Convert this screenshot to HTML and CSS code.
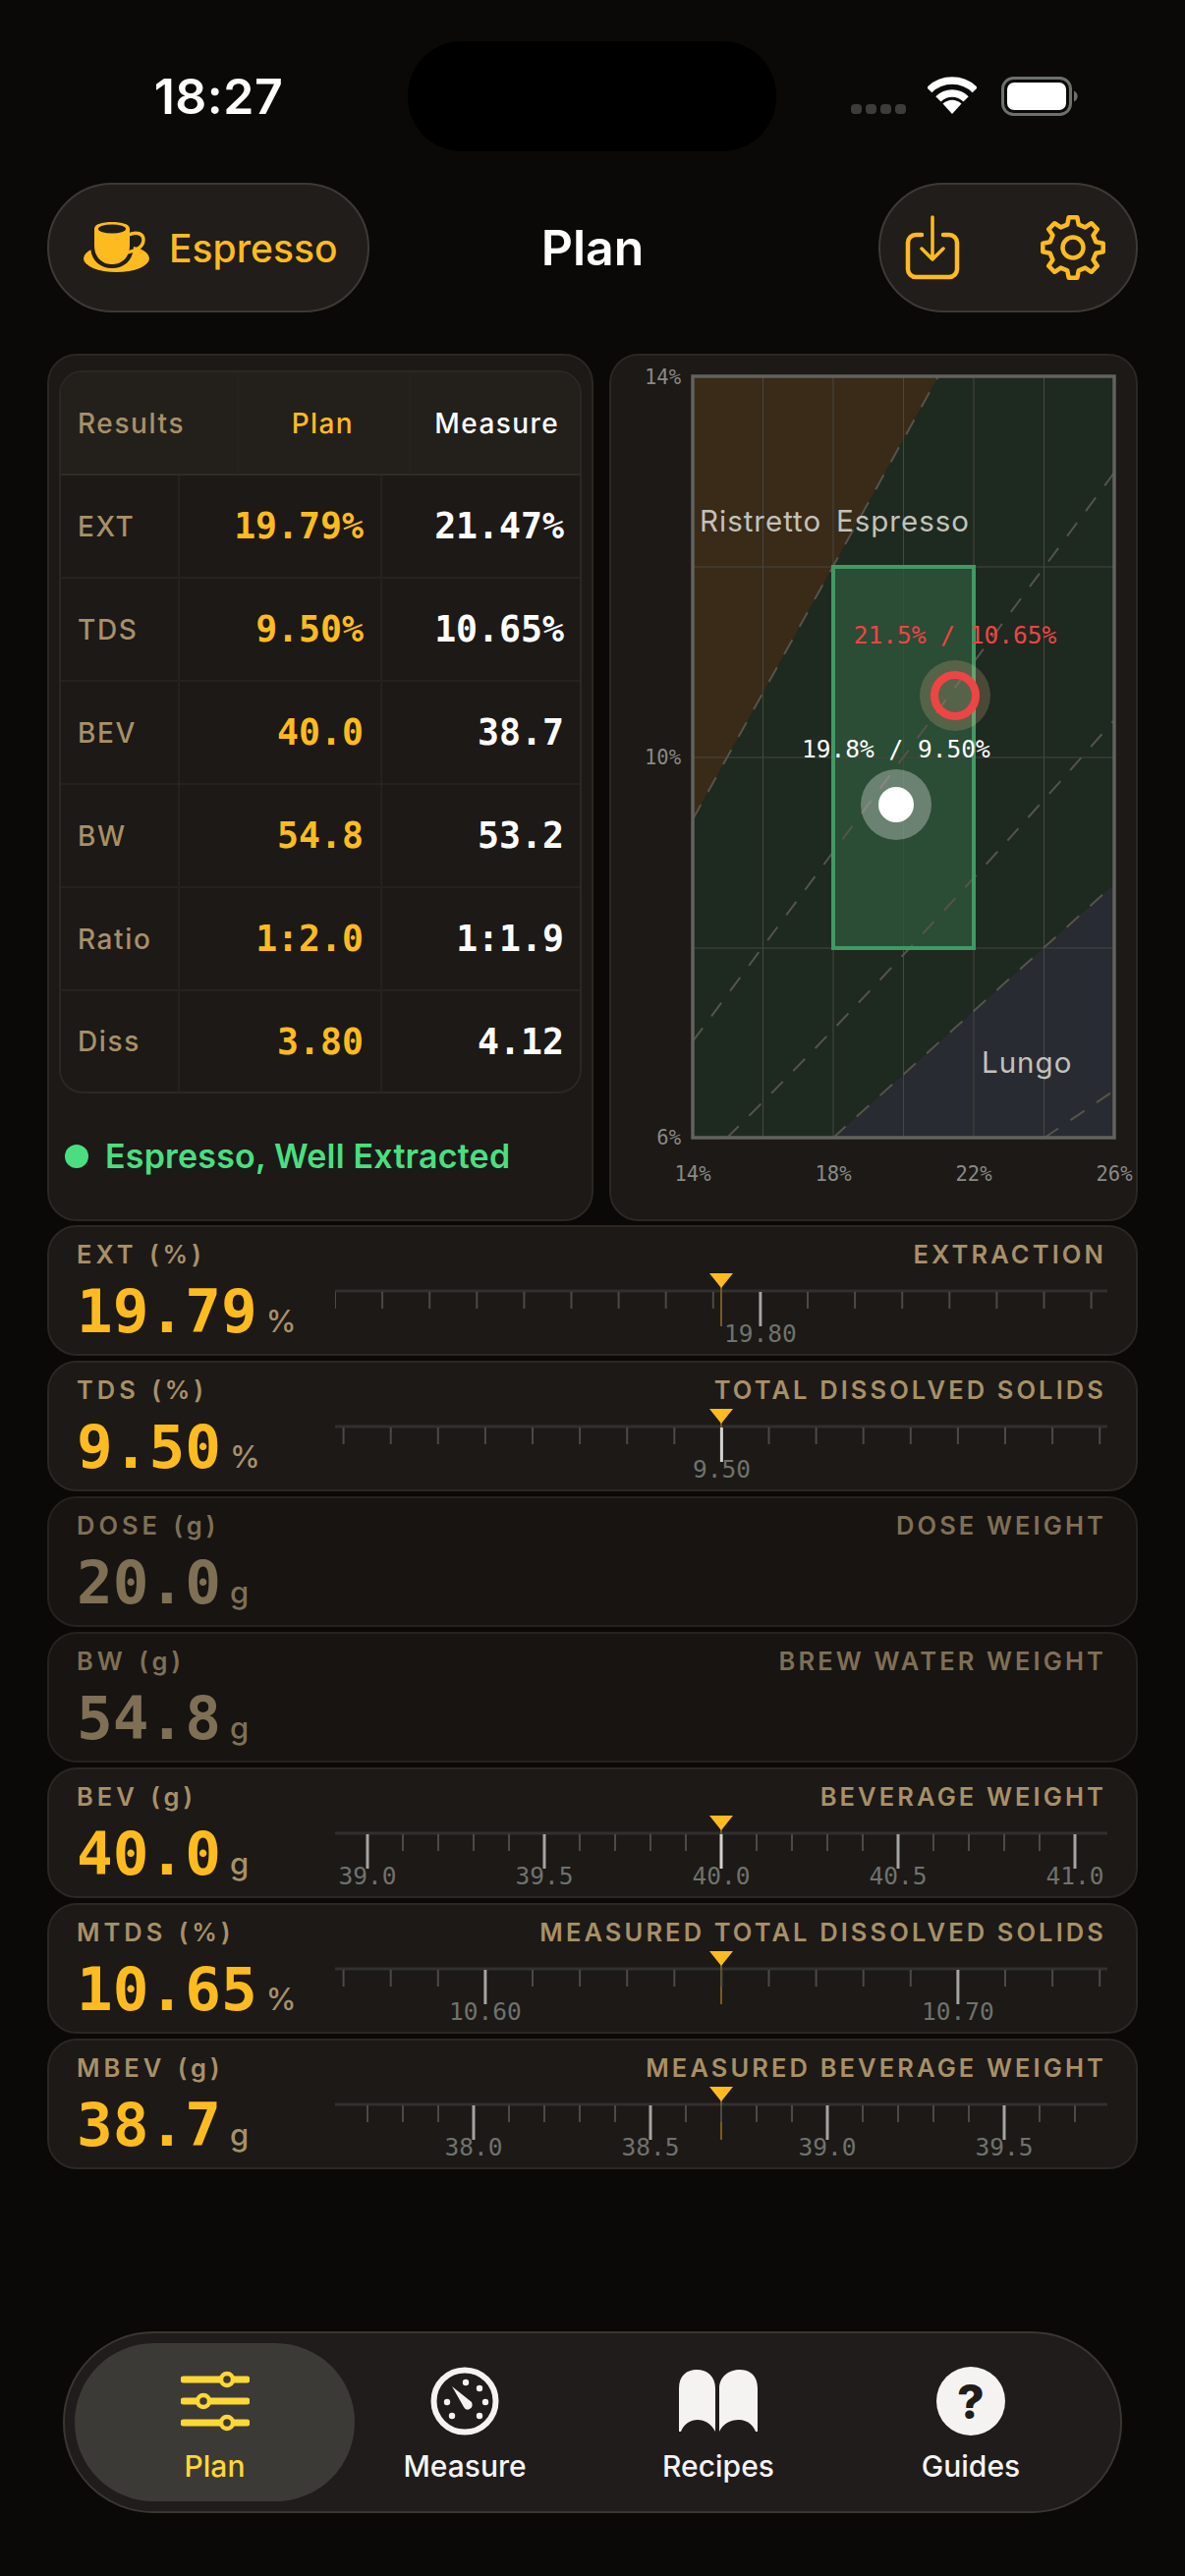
FILE: index.html
```html
<!DOCTYPE html>
<html lang="en">
<head>
  <meta charset="UTF-8">
  <meta name="viewport" content="width=device-width, initial-scale=1.0">
  <title>Plan</title>
  <link rel="stylesheet" href="styles.css">
</head>
<body>
  <div class="status-bar">
    <div class="time">18:27</div>
    <div class="island"></div>
    <div class="status-icons">
      <div class="signal"><i></i><i></i><i></i><i></i></div>
      <svg class="wifi" width="50" height="38" viewBox="0 0 50 38">
        <path class="wifi-arc" d="M1.7 13.7a33 33 0 0 1 46.6 0"/>
        <path class="wifi-arc" d="M10.9 22.9a20 20 0 0 1 28.2 0"/>
        <path class="wifi-fill" d="M25 38L15.5 27.5Q25 20 34.500 27.500Z"/>
      </svg>
      <svg class="battery" width="78" height="40" viewBox="0 0 78 40">
        <rect class="battery-shell" x="1.500" y="1.500" width="69" height="37" rx="11"/>
        <rect class="battery-level" x="6" y="6" width="60" height="28" rx="7"/>
        <path class="battery-nub" d="M74 14.500a6 6 0 0 1 0 11z"/>
      </svg>
    </div>
  </div>

  <header class="header">
    <div class="header-left">
      <button class="pill recipe-pill">
        <svg width="68" height="52" viewBox="0 0 68 52">
          <ellipse class="fill-amber" cx="33.500" cy="37" rx="33.500" ry="14"/>
          <path class="cup-gap" d="M7 4H51V24C51 38 42 47 29 47S7 38 7 24z"/>
          <path class="cup-handle" d="M46 13C54 9 61 12 61 18 61 25 54 29 44 31"/>
          <path class="fill-amber" d="M11 7C11 2 19 0 29 0S47 2 47 7V24C47 35 40 43 29 43S11 35 11 24z"/>
          <ellipse class="cup-hole" cx="29" cy="7" rx="14" ry="4.500"/>
        </svg>
        <span>Espresso</span>
      </button>
    </div>
    <h1 class="title">Plan</h1>
    <div class="header-right">
      <div class="pill action-pill">
        <svg width="56" height="66" viewBox="0 0 56 66">
          <path class="stroke-amber" d="M17 20H11a8 8 0 0 0-8 8v27a8 8 0 0 0 8 8h34a8 8 0 0 0 8-8V28a8 8 0 0 0-8-8H39"/>
          <path class="stroke-amber thin" d="M28 2v43M17 34l11 11 11-11"/>
        </svg>
        <svg width="68" height="68" viewBox="-34 -34 68 68">
          <polygon class="stroke-amber" points="23.300,-5.800 30.700,-4.300 30.700,4.300 23.300,5.800 20.600,12.400 24.800,18.700 18.700,24.800 12.400,20.600 5.800,23.300 4.300,30.700 -4.300,30.700 -5.800,23.300 -12.400,20.600 -18.700,24.800 -24.800,18.700 -20.600,12.400 -23.300,5.800 -30.700,4.300 -30.700,-4.300 -23.300,-5.800 -20.600,-12.400 -24.800,-18.700 -18.700,-24.800 -12.400,-20.600 -5.800,-23.300 -4.300,-30.700 4.300,-30.700 5.800,-23.300 12.400,-20.600 18.700,-24.800 24.800,-18.700 20.600,-12.400"/>
          <circle class="stroke-amber" r="10.500"/>
        </svg>
      </div>
    </div>
  </header>

  <section class="summary">
    <div class="card results-card">
      <div class="results">
        <div class="results-head">
          <div class="cell cell-name">Results</div>
          <div class="cell cell-head cell-plan amber">Plan</div>
          <div class="cell cell-head white">Measure</div>
        </div>
        <div class="results-row">
          <div class="cell cell-name">EXT</div>
          <div class="cell cell-num amber">19.79%</div>
          <div class="cell cell-num white">21.47%</div>
        </div>
        <div class="results-row">
          <div class="cell cell-name">TDS</div>
          <div class="cell cell-num amber">9.50%</div>
          <div class="cell cell-num white">10.65%</div>
        </div>
        <div class="results-row">
          <div class="cell cell-name">BEV</div>
          <div class="cell cell-num amber">40.0</div>
          <div class="cell cell-num white">38.7</div>
        </div>
        <div class="results-row">
          <div class="cell cell-name">BW</div>
          <div class="cell cell-num amber">54.8</div>
          <div class="cell cell-num white">53.2</div>
        </div>
        <div class="results-row">
          <div class="cell cell-name">Ratio</div>
          <div class="cell cell-num amber">1:2.0</div>
          <div class="cell cell-num white">1:1.9</div>
        </div>
        <div class="results-row">
          <div class="cell cell-name">Diss</div>
          <div class="cell cell-num amber">3.80</div>
          <div class="cell cell-num white">4.12</div>
        </div>
      </div>
      <div class="verdict"><i></i>Espresso, Well Extracted</div>
    </div>

    <div class="card chart-card">
      <svg class="chart" width="534" height="879" viewBox="622 362 534 879">
        <rect class="zone-base" x="705" y="383" width="429" height="775"/>
        <polygon class="zone-ristretto" points="705,383 955,383 705,834"/>
        <polygon class="zone-lungo" points="848,1158 1134,900 1134,1158"/>
        <rect class="zone-target" x="848" y="577" width="143" height="388"/>

        <path class="grid" d="M776.500 383V1158M848 383V1158M919.500 383V1158M991 383V1158M1062.500 383V1158M705 577H1134M705 771H1134M705 965H1134"/>
        <path class="dash" d="M705 834L955 383"/>
        <path class="dash" d="M705 1060L1134 481"/>
        <path class="dash" d="M740 1158Q900 1000 1134 733"/>
        <path class="dash" d="M848 1158L1134 900"/>
        <path class="dash" d="M1063 1158L1134 1110"/>

        <rect class="target-outline" x="848" y="577" width="143" height="388"/>
        <rect class="plot-outline" x="705" y="383" width="429" height="775"/>

        <text class="axis" x="693" y="391" text-anchor="end">14%</text>
        <text class="axis" x="693" y="778" text-anchor="end">10%</text>
        <text class="axis" x="693" y="1165" text-anchor="end">6%</text>
        <text class="axis" x="705" y="1202" text-anchor="middle">14%</text>
        <text class="axis" x="848" y="1202" text-anchor="middle">18%</text>
        <text class="axis" x="991" y="1202" text-anchor="middle">22%</text>
        <text class="axis" x="1134" y="1202" text-anchor="middle">26%</text>

        <text class="zone-label" x="712" y="541">Ristretto</text>
        <text class="zone-label" x="851" y="541">Espresso</text>
        <text class="zone-label" x="999" y="1092">Lungo</text>

        <circle class="halo-red" cx="972" cy="708" r="36"/>
        <circle class="ring-red" cx="972" cy="708" r="21"/>
        <circle class="halo-white" cx="912" cy="819" r="36"/>
        <circle class="dot-white" cx="912" cy="819" r="18"/>
        <text class="point-label red" x="972" y="655" text-anchor="middle">21.5% / 10.65%</text>
        <text class="point-label white" x="912" y="771" text-anchor="middle">19.8% / 9.50%</text>
      </svg>
    </div>
  </section>

  <section class="sliders">
    <div class="slider">
      <div class="slider-top"><span>EXT (%)</span><span>EXTRACTION</span></div>
      <div class="slider-main">
        <div class="reading"><b>19.79</b><small>%</small></div>
        <svg class="ruler" data-first="0" data-step="48.100" data-count="17" data-majors="9:19.80"></svg>
      </div>
    </div>
    <div class="slider">
      <div class="slider-top"><span>TDS (%)</span><span>TOTAL DISSOLVED SOLIDS</span></div>
      <div class="slider-main">
        <div class="reading"><b>9.50</b><small>%</small></div>
        <svg class="ruler" data-first="8.600" data-step="48.100" data-count="17" data-majors="8:9.50"></svg>
      </div>
    </div>
    <div class="slider slider-off">
      <div class="slider-top"><span>DOSE (g)</span><span>DOSE WEIGHT</span></div>
      <div class="slider-main">
        <div class="reading"><b>20.0</b><small>g</small></div>
      </div>
    </div>
    <div class="slider slider-off">
      <div class="slider-top"><span>BW (g)</span><span>BREW WATER WEIGHT</span></div>
      <div class="slider-main">
        <div class="reading"><b>54.8</b><small>g</small></div>
      </div>
    </div>
    <div class="slider">
      <div class="slider-top"><span>BEV (g)</span><span>BEVERAGE WEIGHT</span></div>
      <div class="slider-main">
        <div class="reading"><b>40.0</b><small>g</small></div>
        <svg class="ruler" data-first="33" data-step="36" data-count="21" data-majors="0:39.0,5:39.5,10:40.0,15:40.5,20:41.0"></svg>
      </div>
    </div>
    <div class="slider">
      <div class="slider-top"><span>MTDS (%)</span><span>MEASURED TOTAL DISSOLVED SOLIDS</span></div>
      <div class="slider-main">
        <div class="reading"><b>10.65</b><small>%</small></div>
        <svg class="ruler" data-first="8.600" data-step="48.100" data-count="17" data-majors="3:10.60,13:10.70"></svg>
      </div>
    </div>
    <div class="slider">
      <div class="slider-top"><span>MBEV (g)</span><span>MEASURED BEVERAGE WEIGHT</span></div>
      <div class="slider-main">
        <div class="reading"><b>38.7</b><small>g</small></div>
        <svg class="ruler" data-first="33" data-step="36" data-count="21" data-majors="3:38.0,8:38.5,13:39.0,18:39.5"></svg>
      </div>
    </div>
  </section>

  <nav class="tabs">
    <div class="tab tab-active">
      <svg width="70" height="60" viewBox="0 0 70 60">
        <path class="slider-line" d="M3 8H67M3 30H67M3 52H67"/>
        <circle class="slider-knob" cx="47" cy="8" r="6"/>
        <circle class="slider-knob" cx="23" cy="30" r="6"/>
        <circle class="slider-knob" cx="47" cy="52" r="6"/>
      </svg>
      <span>Plan</span>
    </div>
    <div class="tab">
      <svg width="70" height="70" viewBox="0 0 70 70">
        <circle class="gauge-ring" cx="35" cy="35" r="31.500"/>
        <g class="gauge-dots">
          <circle cx="36" cy="16" r="3.200"/><circle cx="50" cy="22" r="3.200"/><circle cx="56" cy="36" r="3.200"/>
          <circle cx="50" cy="50" r="3.200"/><circle cx="22" cy="50" r="3.200"/><circle cx="17" cy="36" r="3.200"/>
        </g>
        <path class="gauge-dots" d="M22 20L42 36Q44 41 40 43 36 45 34 41z"/>
      </svg>
      <span>Measure</span>
    </div>
    <div class="tab">
      <svg width="80" height="66" viewBox="0 0 80 66">
        <path class="gauge-dots" d="M0 20C0 7 8 1 18 1 29 1 37 8 37 20V64C33 56 26 52 19 52 12 52 5 56 2 64H0z"/>
        <path class="gauge-dots" d="M80 20C80 7 72 1 62 1 51 1 41 8 41 20V64C45 56 52 52 61 52 68 52 75 56 78 64H80z"/>
      </svg>
      <span>Recipes</span>
    </div>
    <div class="tab">
      <div class="help-icon">?</div>
      <span>Guides</span>
    </div>
  </nav>

  <script>
    // Build the ruler scales from their data attributes
    const NS = 'http://www.w3.org/2000/svg';
    const POINTER_X = 393;

    const addLine = (svg, cls, x, y1, y2) => {
      const line = document.createElementNS(NS, 'line');
      line.setAttribute('class', cls);
      line.setAttribute('x1', x);
      line.setAttribute('x2', x);
      line.setAttribute('y1', y1);
      line.setAttribute('y2', y2);
      svg.appendChild(line);
    };

    document.querySelectorAll('.ruler').forEach(svg => {
      const first = Number(svg.dataset.first);
      const step = Number(svg.dataset.step);
      const count = Number(svg.dataset.count);
      const majors = {};
      svg.dataset.majors.split(',').forEach(item => {
        const [index, label] = item.split(':');
        majors[index] = label;
      });

      svg.setAttribute('width', 786);
      svg.setAttribute('height', 80);
      svg.setAttribute('viewBox', '0 0 786 80');

      const base = document.createElementNS(NS, 'line');
      base.setAttribute('class', 'ruler-base');
      base.setAttribute('x1', 0);
      base.setAttribute('x2', 786);
      base.setAttribute('y1', 22);
      base.setAttribute('y2', 22);
      svg.appendChild(base);

      addLine(svg, 'ruler-pointer', POINTER_X, 18, 58);

      for (let i = 0; i < count; i++) {
        const x = first + i * step;
        if (majors[i]) {
          const near = Math.abs(x - POINTER_X) < 2;
          addLine(svg, near ? 'ruler-major ruler-major-on' : 'ruler-major', x, 23, 58);
          const text = document.createElementNS(NS, 'text');
          text.setAttribute('class', 'ruler-label');
          text.setAttribute('x', x);
          text.setAttribute('y', 74);
          text.setAttribute('text-anchor', 'middle');
          text.textContent = majors[i];
          svg.appendChild(text);
        } else {
          addLine(svg, 'ruler-minor', x, 23, 40);
        }
      }

      const mark = document.createElementNS(NS, 'polygon');
      mark.setAttribute('class', 'ruler-mark');
      mark.setAttribute('points', `${POINTER_X - 12},4 ${POINTER_X + 12},4 ${POINTER_X},19`);
      svg.appendChild(mark);
    });
  </script>
</body>
</html>
```

FILE: styles.css
```css
* {
  box-sizing: border-box;
}
html, body {
  margin: 0;
  height: 2622px;
  overflow: hidden;
}
body {
  padding-top: 42px;
  background: #0a0908;
  color: #fff;
  font-family: Inter, "Liberation Sans", sans-serif;
}
.amber {
  color: #fdbb1f;
}
.white {
  color: #fff;
}
.red {
  fill: #ef4444;
}

/* status bar */
.status-bar {
  display: grid;
  grid-template-columns: 415px 375px 1fr;
  height: 110px;
}
.time {
  padding-left: 30px;
  text-align: center;
  font-size: 50px;
  font-weight: 600;
  line-height: 112px;
  letter-spacing: 0.5px;
}
.island {
  background: #000;
  border-radius: 55px;
}
.status-icons {
  display: flex;
  align-items: flex-start;
  justify-content: flex-end;
  padding: 36px 109px 0 0;
}
.signal {
  display: flex;
  gap: 4px;
  margin: 28px 22px 0 0;
}
.signal i {
  width: 11px;
  height: 10px;
  border-radius: 4px;
  background: #3c3c3b;
}
.wifi {
  margin-right: 25px;
}
.wifi-arc {
  fill: none;
  stroke: #fff;
  stroke-width: 7.500;
}
.wifi-fill {
  fill: #fff;
}
.battery-shell {
  fill: none;
  stroke: #6c716c;
  stroke-width: 3;
}
.battery-level {
  fill: #fff;
}
.battery-nub {
  fill: #6c716c;
}

/* header */
.header {
  display: grid;
  grid-template-columns: 1fr auto 1fr;
  align-items: center;
  height: 132px;
  margin: 34px 48px 42px;
}
.header-right {
  display: flex;
  justify-content: flex-end;
}
.pill {
  display: flex;
  align-items: center;
  height: 132px;
  border: 2px solid #3d3a35;
  border-radius: 66px;
  background: #201d1b;
}
.recipe-pill {
  width: 328px;
  padding: 0 0 0 35px;
  gap: 19px;
  color: #fdbb1f;
  font-family: inherit;
  font-size: 39px;
  font-weight: 500;
}
.action-pill {
  width: 264px;
  padding: 0 30px 0 25px;
  justify-content: space-between;
}
.title {
  margin: 0;
  font-size: 50px;
  font-weight: 600;
}
.fill-amber {
  fill: #fdbb1f;
}
.cup-gap {
  fill: #201d1b;
}
.cup-hole {
  fill: #201d1b;
}
.cup-handle {
  fill: none;
  stroke: #fdbb1f;
  stroke-width: 3.500;
}
.stroke-amber {
  fill: none;
  stroke: #fdbb1f;
  stroke-width: 4.500;
  stroke-linejoin: round;
  stroke-linecap: round;
}
.thin {
  stroke-width: 3.500;
}

/* summary row */
.summary {
  display: grid;
  grid-template-columns: 556px 538px;
  gap: 16px;
  height: 883px;
  margin: 0 48px 4px;
}
.card {
  border: 2px solid #2b2722;
  border-radius: 30px;
  background: #1c1917;
}
.results-card {
  padding: 15px 10px 0;
}
.results {
  border: 2px solid #2b2823;
  border-radius: 24px;
  overflow: hidden;
}
.results-head,
.results-row {
  display: grid;
  height: 105px;
  align-items: stretch;
  padding-bottom: 3px;
}
.results-head {
  grid-template-columns: 179px 175px 173px;
  background: #23201c;
  border-bottom: 2px solid #2f2b26;
}
.results-row {
  grid-template-columns: 119px 206px 202px;
  border-bottom: 2px solid #25221e;
}
.results-row:last-child {
  height: 102px;
  border-bottom: 0;
}
.cell {
  display: flex;
  align-items: center;
  justify-content: flex-end;
  padding-right: 16px;
  border-left: 2px solid #25221e;
  margin-bottom: -3px;
}
.cell-name {
  justify-content: flex-start;
  padding-left: 17px;
  border-left: 0;
  color: #a89068;
  font-size: 28px;
  font-weight: 500;
  letter-spacing: 1.6px;
}
.cell-head {
  padding-right: 20px;
  font-size: 28px;
  font-weight: 500;
  letter-spacing: 1.4px;
}
.cell-plan {
  padding-right: 56px;
}
.cell-num {
  font-family: "DejaVu Sans Mono", "Liberation Mono", monospace;
  font-size: 36.500px;
  font-weight: 700;
}
.results-row .cell-num:nth-child(2) {
  padding-right: 17px;
}
.results-row .cell-num:nth-child(3) {
  padding-right: 15px;
}
.verdict {
  display: flex;
  align-items: center;
  gap: 17px;
  margin: 43px 0 0 6px;
  color: #4ade80;
  font-size: 34px;
  font-weight: 600;
  letter-spacing: 0.200px;
}
.verdict i {
  width: 24px;
  height: 24px;
  border-radius: 50%;
  background: #4ade80;
}

/* chart */
.chart {
  display: block;
}
.zone-base {
  fill: #1e2920;
}
.zone-ristretto {
  fill: #3a2a18;
}
.zone-lungo {
  fill: #292b32;
}
.zone-target {
  fill: #2b4c35;
}
.grid {
  fill: none;
  stroke: #444943;
  stroke-width: 1;
}
.dash {
  fill: none;
  stroke: #56544a;
  stroke-width: 2;
  stroke-dasharray: 17 15;
}
.target-outline {
  fill: none;
  stroke: #3f9a63;
  stroke-width: 4;
}
.plot-outline {
  fill: none;
  stroke: #62625e;
  stroke-width: 3.500;
}
.axis {
  fill: #8a8a85;
  font-family: "DejaVu Sans Mono", monospace;
  font-size: 20.500px;
}
.zone-label {
  fill: #c2c2ba;
  font-size: 29.500px;
  letter-spacing: 1px;
}
.point-label {
  font-family: "DejaVu Sans Mono", monospace;
  font-size: 24.500px;
}
.point-label.white {
  fill: #fff;
}
.halo-red {
  fill: rgba(255, 200, 150, 0.2);
}
.ring-red {
  fill: none;
  stroke: #ef4444;
  stroke-width: 8;
}
.halo-white {
  fill: rgba(255, 255, 255, 0.3);
}
.dot-white {
  fill: #fff;
}

/* sliders */
.sliders {
  display: flex;
  flex-direction: column;
  gap: 5px;
  margin: 0 48px;
}
.slider {
  height: 133px;
  padding: 13px 30px 0 28px;
  border: 2px solid #2b2722;
  border-radius: 30px;
  background: #1c1917;
}
.slider-top {
  display: flex;
  justify-content: space-between;
  height: 30px;
  color: #a89068;
  font-size: 25.500px;
  font-weight: 600;
  line-height: 30px;
  letter-spacing: 3.100px;
}
.slider-top span:first-child {
  letter-spacing: 4px;
  word-spacing: 2px;
}
.slider-main {
  display: flex;
  height: 80px;
  margin-right: -1px;
}
.reading {
  display: flex;
  align-items: baseline;
  gap: 9px;
  width: 264px;
  font-family: "DejaVu Sans Mono", monospace;
  color: #fdbb1f;
  line-height: 86px;
}
.reading b {
  font-size: 61px;
}
.reading small {
  color: #a89068;
  font-family: Inter, sans-serif;
  font-size: 31px;
  font-weight: 500;
}
.slider-off {
  background: #171412;
  border-color: #26221d;
}
.slider-off .slider-top,
.slider-off .reading,
.slider-off .reading small {
  color: #7f6f55;
}
.ruler {
  display: block;
  flex: none;
}
.ruler-base {
  stroke: #30302f;
  stroke-width: 3;
}
.ruler-minor {
  stroke: #4a4a46;
  stroke-width: 2;
}
.ruler-major {
  stroke: #a4a4a2;
  stroke-width: 3;
}
.ruler-major-on {
  stroke: #d2d2d0;
}
.ruler-pointer {
  stroke: #7a5a1a;
  stroke-width: 2;
}
.ruler-mark {
  fill: #fdbb1f;
}
.ruler-label {
  fill: #6f726d;
  font-family: "DejaVu Sans Mono", monospace;
  font-size: 24.500px;
}

/* tab bar */
.tabs {
  display: grid;
  grid-template-columns: 284px 226px 290px 224px;
  width: 1078px;
  height: 185px;
  margin: 165px 0 0 64px;
  padding: 10px;
  border: 2px solid #3a3731;
  border-radius: 92px;
  background: #1f1c1b;
}
.tab {
  display: flex;
  flex-direction: column;
  align-items: center;
  justify-content: flex-start;
  height: 161px;
  padding-top: 24px;
  color: #f5f3f2;
  font-size: 30px;
  font-weight: 500;
}
.tab svg,
.help-icon {
  height: 70px;
  flex: none;
}
.tab span {
  margin-top: 13px;
}
.tab-active {
  width: 285px;
  border-radius: 81px;
  background: #3c3a37;
  color: #fdd835;
}
.slider-line {
  fill: none;
  stroke: #fdd835;
  stroke-width: 7;
  stroke-linecap: round;
}
.slider-knob {
  fill: #3c3a37;
  stroke: #fdd835;
  stroke-width: 4.500;
}
.gauge-ring {
  fill: none;
  stroke: #f5f3f2;
  stroke-width: 6;
}
.gauge-dots {
  fill: #f5f3f2;
}
.help-icon {
  display: flex;
  align-items: center;
  justify-content: center;
  width: 70px;
  border-radius: 50%;
  background: #f5f3f2;
  color: #1f1c1b;
  font-size: 48px;
  font-weight: 800;
}
```
